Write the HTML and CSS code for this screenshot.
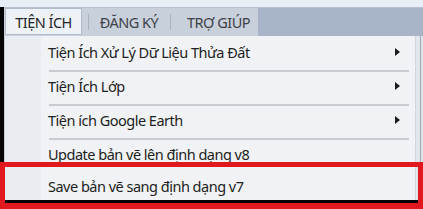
FILE: index.html
```html
<!DOCTYPE html>
<html lang="vi">
<head>
<meta charset="utf-8">
<link rel="stylesheet" href="styles.css">
</head>
<body>
<div class="screen">
  <div class="topstrip"></div>
  <div class="main">
    <div class="leftedge"></div>
    <div class="content">
      <div class="menubar">
        <div class="tabs">
          <div class="tab active">TIỆN ÍCH</div>
          <div class="tab second">ĐĂNG KÝ</div>
          <div class="tab third">TRỢ GIÚP</div>
        </div>
      </div>
      <div class="below">
        <div class="dropdown">
          <div class="item"><span class="label">Tiện Ích Xử Lý Dữ Liệu Thửa Đất</span><span class="arrow"></span></div>
          <div class="sep"></div>
          <div class="item"><span class="label">Tiện Ích Lớp</span><span class="arrow"></span></div>
          <div class="sep"></div>
          <div class="item"><span class="label">Tiện ích Google Earth</span><span class="arrow"></span></div>
          <div class="sep"></div>
          <div class="item"><span class="label">Update bản vẽ lên định dạng v8</span></div>
          <div class="item"><span class="label">Save bản vẽ sang định dạng v7</span></div>
        </div>
        <div class="rightedge"></div>
      </div>
    </div>
  </div>
  <div class="highlight"></div>
</div>
</body>
</html>
```
FILE: styles.css
```css
* { box-sizing: border-box; }
html, body { margin: 0; padding: 0; }
body {
  width: 423px;
  height: 209px;
  overflow: hidden;
  background: #000;
  font-family: "Noto Sans", "Open Sans", sans-serif;
}
.screen {
  position: relative;
  width: 423px;
  height: 209px;
  overflow: hidden;
  background: #000;
}
.topstrip {
  height: 7px;
  background: #e7eef6;
}
.main {
  display: flex;
  height: 202px;
}
.leftedge {
  width: 4px;
  background: #050505;
}
.content {
  flex: 1;
  display: flex;
  flex-direction: column;
}
.menubar {
  height: 29px;
  background: #a8b4c7;
  display: flex;
  border-top: 1px solid #b7c1d1;
}
.tabs {
  display: flex;
  width: 254px;
  background: #c8d0dc;
  padding-left: 1px;
}
.tab {
  font-size: 14.5px;
  letter-spacing: -0.5px;
  color: #3e4146;
  display: flex;
  align-items: center;
  height: 28px;
  white-space: nowrap;
}
.tab.active {
  width: 77px;
  height: 27px;
  justify-content: center;
  background: #eef1f5;
  border: 1px solid #b3bcc9;
  color: #25272a;
}
.tab.second {
  margin-left: 6px;
  width: 82px;
  justify-content: center;
  position: relative;
}
.tab.third {
  width: 88px;
  padding-left: 17px;
  position: relative;
}
.tab.second::before,
.tab.third::before {
  content: "";
  position: absolute;
  left: 0;
  top: 6px;
  width: 1px;
  height: 16px;
  background: #aab3c0;
}
.below {
  display: flex;
  height: 164px;
}
.dropdown {
  width: 412px;
  height: 164px;
  overflow: hidden;
  padding-top: 2px;
  background: linear-gradient(to right, #c9ced6 0, #c9ced6 1px, #e9edf2 1px, #e9edf2 37px, #f0f2f5 37px);
  border-right: 1px solid #d3d7dd;
}
.item {
  display: flex;
  align-items: center;
  justify-content: space-between;
  padding: 4px 15px 8px 44px;
  height: 32px;
}
.label {
  font-size: 14.5px;
  line-height: 20px;
  letter-spacing: -0.5px;
  color: #1d1e20;
  white-space: nowrap;
}
.arrow {
  width: 0;
  height: 0;
  border-left: 5px solid #1a1c20;
  border-top: 4.5px solid transparent;
  border-bottom: 4.5px solid transparent;
  margin-top: -1px;
}
.sep {
  height: 2px;
  margin: 0 6px 0 45px;
  background: #c8cbd0;
}
.rightedge {
  flex: 1;
  background: linear-gradient(to right, #e2e7ee 0, #e2e7ee 4px, #9ea9b8 4px, #9ea9b8 5px, #dfe4ea 5px);
}
.highlight {
  position: absolute;
  left: 0;
  top: 162px;
  width: 423px;
  height: 47px;
  border-style: solid;
  border-color: #e1191f;
  border-width: 5px 5px 6px 5px;
}
```
